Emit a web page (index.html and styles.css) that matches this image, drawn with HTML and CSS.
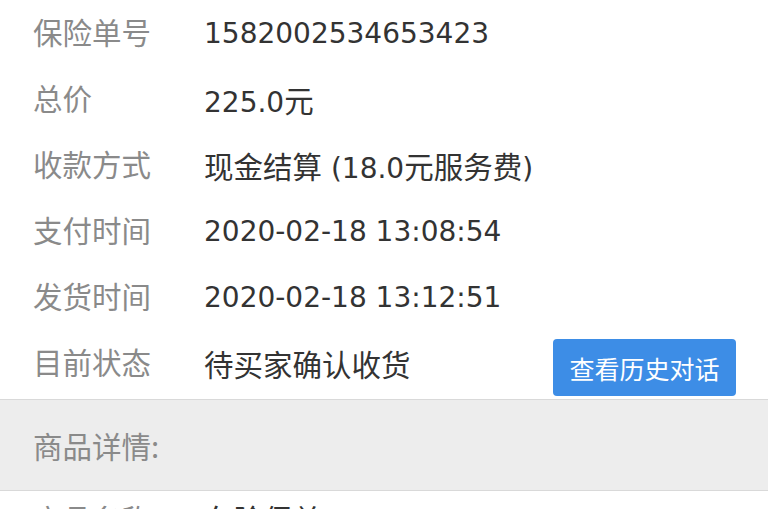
FILE: index.html
```html
<!DOCTYPE html>
<html lang="zh-CN">
<head>
<meta charset="utf-8">
<link rel="stylesheet" href="styles.css">
</head>
<body>
<div class="page">
  <div class="info">
    <div class="row"><span class="label">保险单号</span><span class="value">1582002534653423</span></div>
    <div class="row"><span class="label">总价</span><span class="value">225.0<span class="cj">元</span></span></div>
    <div class="row"><span class="label">收款方式</span><span class="value"><span class="cj">现金结算</span> (18.0<span class="cj">元服务费</span>)</span></div>
    <div class="row"><span class="label">支付时间</span><span class="value">2020-02-18 13:08:54</span></div>
    <div class="row"><span class="label">发货时间</span><span class="value">2020-02-18 13:12:51</span></div>
    <div class="row row-status"><span class="label">目前状态</span><span class="value"><span class="cj">待买家确认收货</span></span><button class="btn">查看历史对话</button></div>
  </div>
  <div class="section">商品详情:</div>
  <div class="row row-next"><span class="label">商品名称</span><span class="value"><span class="cj">车险保单</span></span></div>
</div>
</body>
</html>
```

FILE: styles.css
```css
html, body {
  margin: 0;
  padding: 0;
  background: #ffffff;
}
body {
  font-family: "DejaVu Sans", "Noto Sans CJK SC", sans-serif;
  font-size: 28px;
  color: #333333;
  width: 768px;
  height: 510px;
  overflow: hidden;
}
.info {
  padding-bottom: 3px;
}
.row {
  display: flex;
  align-items: center;
  height: 66px;
  padding-left: 33px;
  padding-right: 32px;
}
.label {
  width: 171px;
  flex: none;
  color: #8a8a8a;
  font-family: "Noto Sans CJK SC", sans-serif;
  font-size: 29.5px;
  padding-bottom: 4px;
}
.value {
  flex: 1;
  color: #333333;
  white-space: nowrap;
}
.cj {
  font-family: "Noto Sans CJK SC", sans-serif;
  font-size: 29.5px;
}
.btn {
  flex: none;
  width: 183px;
  height: 57px;
  border: none;
  border-radius: 4px;
  background: #3d8de6;
  color: #ffffff;
  font-family: "Noto Sans CJK SC", sans-serif;
  font-size: 25px;
  padding: 0;
  margin-top: 9px;
}
.section {
  border-top: 1px solid #d9d9d9;
  border-bottom: 1px solid #d9d9d9;
  background: #ededed;
  height: 90px;
  display: flex;
  align-items: center;
  padding-left: 33px;
  color: #8a8a8a;
  font-family: "Noto Sans CJK SC", sans-serif;
  font-size: 29.5px;
}
.section-title {
  padding-bottom: 4px;
}
.row-next {
  height: 12px;
  padding-top: 6px;
  align-items: flex-start;
  overflow: hidden;
}
.row-next .label {
  padding-bottom: 0;
}
```
